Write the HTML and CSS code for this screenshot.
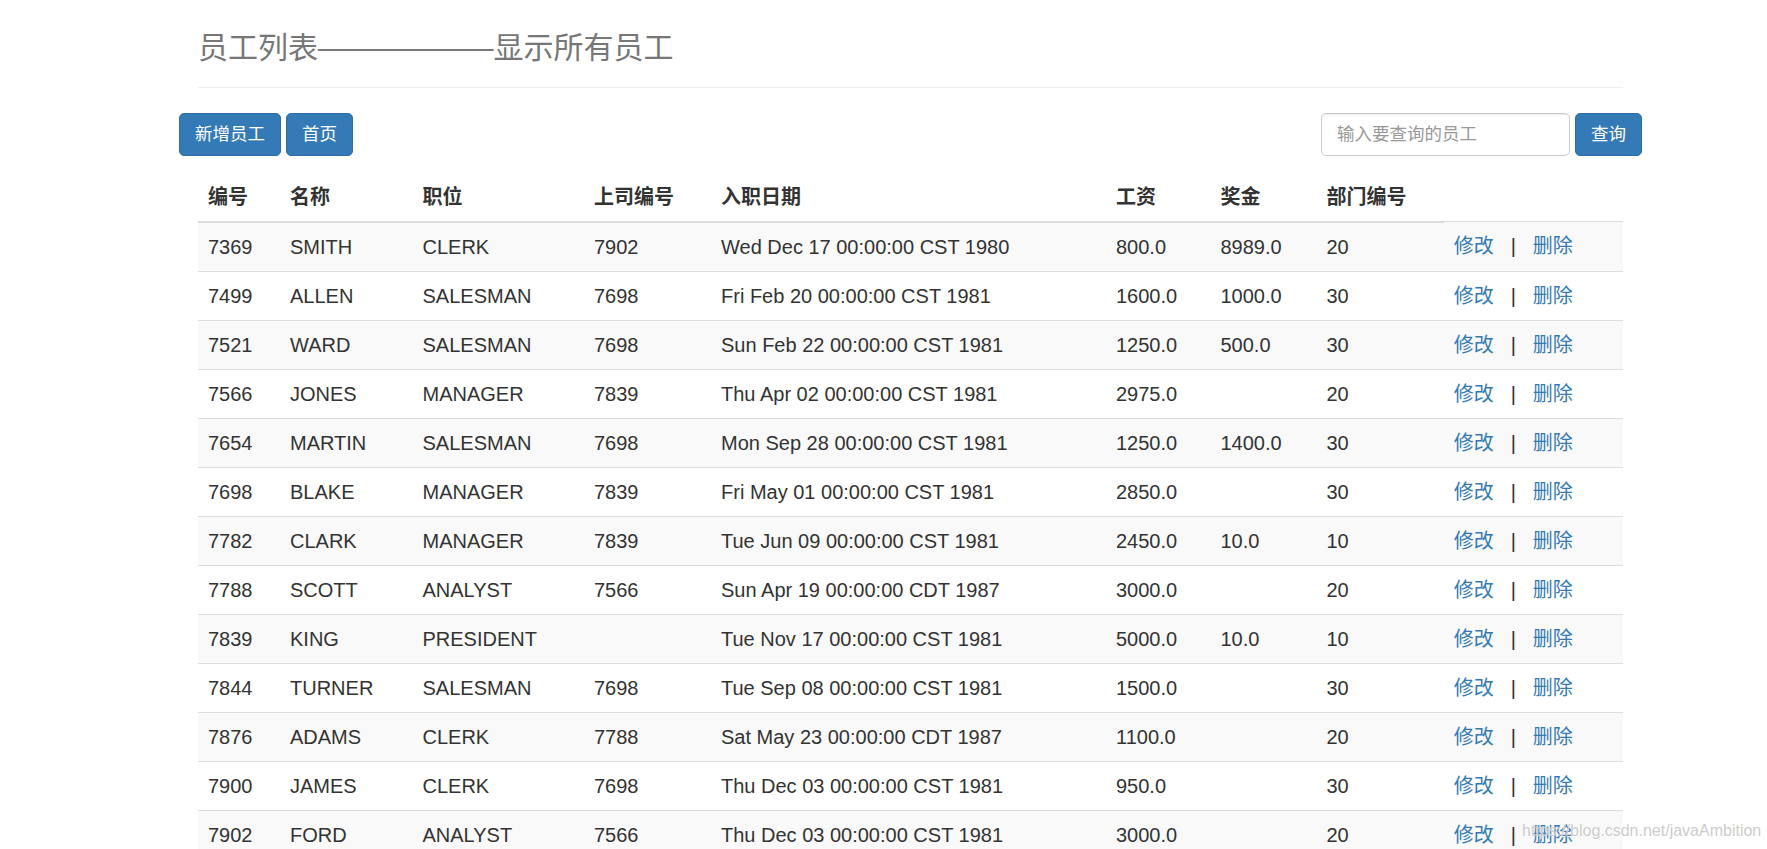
FILE: index.html
```html
<!DOCTYPE html>
<html lang="zh-CN">
<head>
<meta charset="utf-8">
<title>员工列表</title>
<link rel="stylesheet" href="styles.css">
</head>
<body>
<div class="page">
  <div class="page-header">
    <h3 class="title">员工列表<span class="dashes">——————</span>显示所有员工</h3>
  </div>
  <div class="toolbar">
    <div class="btn-group-left">
      <a class="btn" href="#">新增员工</a>
      <a class="btn" href="#">首页</a>
    </div>
    <form class="search">
      <input class="search-input" type="text" placeholder="输入要查询的员工">
      <button class="btn" type="button">查询</button>
    </form>
  </div>
  <table class="emp-table">
    <colgroup>
      <col class="c-no"><col class="c-name"><col class="c-job"><col class="c-mgr"><col class="c-date"><col class="c-sal"><col class="c-comm"><col class="c-dept"><col class="c-ops">
    </colgroup>
    <thead>
      <tr><th>编号</th><th>名称</th><th>职位</th><th>上司编号</th><th>入职日期</th><th>工资</th><th>奖金</th><th>部门编号</th></tr>
    </thead>
    <tbody>
      <tr><td>7369</td><td>SMITH</td><td>CLERK</td><td>7902</td><td>Wed Dec 17 00:00:00 CST 1980</td><td>800.0</td><td>8989.0</td><td>20</td><td class="ops"><a href="#">修改</a><span class="sep">|</span><a href="#">删除</a></td></tr>
      <tr><td>7499</td><td>ALLEN</td><td>SALESMAN</td><td>7698</td><td>Fri Feb 20 00:00:00 CST 1981</td><td>1600.0</td><td>1000.0</td><td>30</td><td class="ops"><a href="#">修改</a><span class="sep">|</span><a href="#">删除</a></td></tr>
      <tr><td>7521</td><td>WARD</td><td>SALESMAN</td><td>7698</td><td>Sun Feb 22 00:00:00 CST 1981</td><td>1250.0</td><td>500.0</td><td>30</td><td class="ops"><a href="#">修改</a><span class="sep">|</span><a href="#">删除</a></td></tr>
      <tr><td>7566</td><td>JONES</td><td>MANAGER</td><td>7839</td><td>Thu Apr 02 00:00:00 CST 1981</td><td>2975.0</td><td></td><td>20</td><td class="ops"><a href="#">修改</a><span class="sep">|</span><a href="#">删除</a></td></tr>
      <tr><td>7654</td><td>MARTIN</td><td>SALESMAN</td><td>7698</td><td>Mon Sep 28 00:00:00 CST 1981</td><td>1250.0</td><td>1400.0</td><td>30</td><td class="ops"><a href="#">修改</a><span class="sep">|</span><a href="#">删除</a></td></tr>
      <tr><td>7698</td><td>BLAKE</td><td>MANAGER</td><td>7839</td><td>Fri May 01 00:00:00 CST 1981</td><td>2850.0</td><td></td><td>30</td><td class="ops"><a href="#">修改</a><span class="sep">|</span><a href="#">删除</a></td></tr>
      <tr><td>7782</td><td>CLARK</td><td>MANAGER</td><td>7839</td><td>Tue Jun 09 00:00:00 CST 1981</td><td>2450.0</td><td>10.0</td><td>10</td><td class="ops"><a href="#">修改</a><span class="sep">|</span><a href="#">删除</a></td></tr>
      <tr><td>7788</td><td>SCOTT</td><td>ANALYST</td><td>7566</td><td>Sun Apr 19 00:00:00 CDT 1987</td><td>3000.0</td><td></td><td>20</td><td class="ops"><a href="#">修改</a><span class="sep">|</span><a href="#">删除</a></td></tr>
      <tr><td>7839</td><td>KING</td><td>PRESIDENT</td><td></td><td>Tue Nov 17 00:00:00 CST 1981</td><td>5000.0</td><td>10.0</td><td>10</td><td class="ops"><a href="#">修改</a><span class="sep">|</span><a href="#">删除</a></td></tr>
      <tr><td>7844</td><td>TURNER</td><td>SALESMAN</td><td>7698</td><td>Tue Sep 08 00:00:00 CST 1981</td><td>1500.0</td><td></td><td>30</td><td class="ops"><a href="#">修改</a><span class="sep">|</span><a href="#">删除</a></td></tr>
      <tr><td>7876</td><td>ADAMS</td><td>CLERK</td><td>7788</td><td>Sat May 23 00:00:00 CDT 1987</td><td>1100.0</td><td></td><td>20</td><td class="ops"><a href="#">修改</a><span class="sep">|</span><a href="#">删除</a></td></tr>
      <tr><td>7900</td><td>JAMES</td><td>CLERK</td><td>7698</td><td>Thu Dec 03 00:00:00 CST 1981</td><td>950.0</td><td></td><td>30</td><td class="ops"><a href="#">修改</a><span class="sep">|</span><a href="#">删除</a></td></tr>
      <tr><td>7902</td><td>FORD</td><td>ANALYST</td><td>7566</td><td>Thu Dec 03 00:00:00 CST 1981</td><td>3000.0</td><td></td><td>20</td><td class="ops"><a href="#">修改</a><span class="sep">|</span><a href="#">删除</a></td></tr>
      <tr><td>7934</td><td>MILLER</td><td>CLERK</td><td>7782</td><td>Sat Jan 23 00:00:00 CST 1982</td><td>1300.0</td><td></td><td>10</td><td class="ops"><a href="#">修改</a><span class="sep">|</span><a href="#">删除</a></td></tr>
    </tbody>
  </table>
</div>
<div class="watermark">https://blog.csdn.net/javaAmbition</div>
</body>
</html>
```

FILE: styles.css
```css
html, body {
  margin: 0;
  padding: 0;
  background: #fff;
}
body {
  font-family: "Liberation Sans", "Noto Sans CJK SC", sans-serif;
  color: #333;
  font-size: 17.5px;
}
.page {
  margin-left: 179px;
  width: 1463px;
}
.page-header {
  margin: 31px 19px 0;
  padding-bottom: 23px;
  border-bottom: 1px solid #eee;
}
.title {
  margin: 0;
  font-size: 30px;
  line-height: 33px;
  font-weight: 400;
  color: #777;
  font-family: "Liberation Sans", "Noto Sans CJK SC", sans-serif;
}
.dashes {
  letter-spacing: -0.9px;
  margin-right: 0.9px;
}
.toolbar {
  margin-top: 25px;
  display: flex;
  justify-content: space-between;
  align-items: center;
}
.btn-group-left, .search {
  display: flex;
  gap: 5px;
  margin: 0;
}
.btn {
  display: inline-block;
  box-sizing: border-box;
  height: 42.5px;
  padding: 0 15px;
  line-height: 40px;
  font-size: 17.5px;
  font-family: "Liberation Sans", "Noto Sans CJK SC", sans-serif;
  color: #fff;
  background: #337ab7;
  border: 1px solid #2e6da4;
  border-radius: 5px;
  text-decoration: none;
  cursor: pointer;
}
.search-input {
  box-sizing: border-box;
  width: 249px;
  height: 42.5px;
  padding: 0 15px;
  font-size: 17.5px;
  font-family: "Liberation Sans", "Noto Sans CJK SC", sans-serif;
  color: #555;
  border: 1px solid #ccc;
  border-radius: 5px;
  box-shadow: inset 0 1px 1px rgba(0,0,0,.075);
  outline: none;
}
.search-input::placeholder {
  color: #999;
}
.emp-table {
  margin: 17px 19px 0;
  width: 1425px;
  table-layout: fixed;
  border-collapse: collapse;
  border-spacing: 0;
  font-size: 20px;
}
.c-no { width: 82px; }
.c-name { width: 132.5px; }
.c-job { width: 171.5px; }
.c-mgr { width: 127px; }
.c-date { width: 395px; }
.c-sal { width: 104.5px; }
.c-comm { width: 106px; }
.c-dept { width: 127.3px; }
.c-ops { width: 179.2px; }
.emp-table th, .emp-table td {
  padding: 10px;
  line-height: 28px;
  text-align: left;
  white-space: nowrap;
  overflow: hidden;
}
.emp-table th {
  font-weight: 700;
  border-bottom: 2px solid #ddd;
  vertical-align: bottom;
}
.emp-table td {
  border-top: 1px solid #ddd;
  vertical-align: top;
}
.emp-table tbody tr:nth-child(odd) {
  background: #f9f9f9;
}
.ops a {
  color: #337ab7;
  text-decoration: none;
}
.sep {
  display: inline-block;
  width: 39px;
  text-align: center;
  color: #333;
}
.watermark {
  position: absolute;
  left: 1522px;
  top: 821px;
  font-family: "Liberation Sans", sans-serif;
  font-size: 16px;
  line-height: 20px;
  color: rgba(190,190,190,0.8);
  text-shadow: 0 0 1px #fff;
  pointer-events: none;
}
```
